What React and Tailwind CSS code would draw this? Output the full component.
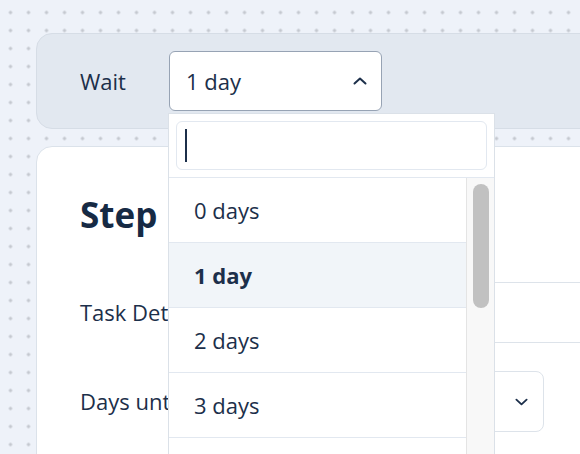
import React from "react";

const ChevronUp = ({ className }) => (
  <svg viewBox="0 0 14 8" className={className} fill="none" stroke="currentColor" strokeWidth="2" strokeLinecap="round" strokeLinejoin="round">
    <path d="M1.5 6.5 7 1.5l5.5 5" />
  </svg>
);

const ChevronDown = ({ className }) => (
  <svg viewBox="0 0 14 8" className={className} fill="none" stroke="currentColor" strokeWidth="2" strokeLinecap="round" strokeLinejoin="round">
    <path d="M1.5 1.5 7 6.5l5.5-5" />
  </svg>
);

const options = ["0 days", "1 day", "2 days", "3 days", "4 days"];

const App = () => {
  const selected = "1 day";

  return (
    <div
      className="relative w-[580px] h-[454px] overflow-hidden bg-[#eef2f9] bg-[radial-gradient(circle,#c4c8cf_1.5px,transparent_1.7px)] bg-size-[18px_18px] bg-position-[1.5px_3.5px] text-[#1c2f4a]"
      style={{ fontFamily: '"Open Sans", "Noto Sans", sans-serif' }}
    >
      <div className="pl-[36px] pt-[33px] w-[700px]">
        {/* Wait panel */}
        <div className="h-[96px] flex items-center rounded-2xl border border-[#d6dde6] bg-[#e2e8f0] pl-[43px]">
          <span className="text-[22px] w-[89px]">Wait</span>
          <div className="w-[213px] h-[60px] flex items-center justify-between rounded-md border border-[#97a3b4] bg-white pl-4 pr-[14px]">
            <span className="text-[22px]">1 day</span>
            <ChevronUp className="w-[14px] h-[8px] text-[#1c2f4a]" />
          </div>
        </div>

        {/* Step card */}
        <div className="mt-[17px] h-[400px] rounded-2xl border border-[#dbe2ea] bg-white pl-[43px]">
          <h1 className="mt-[50px] text-[35px] leading-none font-bold text-[#162a44]">Step 1</h1>
          <div className="mt-[50px] flex items-center h-[61px]">
            <span className="text-[22px] w-[180px]">Task Details</span>
            <div className="h-[61px] flex-1 border-y border-[#dde3ea]" />
          </div>
          <div className="mt-[28px] flex items-center h-[61px]">
            <span className="text-[22px] w-[180px]">Days until due</span>
            <div className="h-[61px] w-[284px] flex items-center justify-end rounded-lg border border-[#dde3ea] pr-[15px]">
              <ChevronDown className="w-[13px] h-[8px] text-[#1c2f4a]" />
            </div>
          </div>
        </div>
      </div>

      {/* Dropdown menu */}
      <div className="absolute left-[168px] top-[113px] w-[327px] h-[360px] z-10 bg-white border border-[#dbe1e8] flex flex-col">
        <div className="p-[7px] border-b border-[#e2e8f0]">
          <div className="h-[49px] rounded-md border border-[#e2e8f0] flex items-center pl-[8px]">
            <div className="w-[2px] h-[33px] bg-[#1c2f4a]" />
          </div>
        </div>
        <div className="flex flex-1">
          <div className="flex-1">
            {options.map((opt) => (
              <div
                key={opt}
                className={
                  opt === selected
                    ? "h-[65px] border-b border-[#e2e8f0] flex items-center pl-[25px] text-[22px] font-bold bg-[#f1f5f9]"
                    : "h-[65px] border-b border-[#e2e8f0] flex items-center pl-[25px] text-[22px]"
                }
              >
                {opt}
              </div>
            ))}
          </div>
          <div className="w-[28px] bg-[#f8f8f8] border-l border-[#e4e4e4] pt-[6px] flex justify-center">
            <div className="w-[16px] h-[124px] rounded-full bg-[#c1c1c1]" />
          </div>
        </div>
      </div>
    </div>
  );
};

export default App;
